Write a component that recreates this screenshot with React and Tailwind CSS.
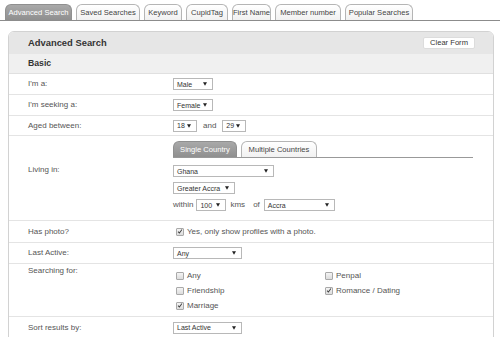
import React from "react";

function Arrow() {
  return (
    <svg width="4" height="4" viewBox="0 0 4 4" className="shrink-0">
      <path d="M0 0.3 L4 0.3 L2 3.8 Z" fill="#222" />
    </svg>
  );
}

function Sel({ text, w }) {
  return (
    <div
      className={`${w} h-[12px] border border-[#b8b8b8] bg-white flex items-center justify-between pl-[3px] pr-[5px] text-[7px] text-[#333] leading-none`}
    >
      <span>{text}</span>
      <Arrow />
    </div>
  );
}

function Check({ checked }) {
  return (
    <span className="w-[8px] h-[8px] border border-[#a9a9a9] rounded-[1px] bg-gradient-to-b from-[#f4f4f4] to-[#dcdcdc] flex items-center justify-center shrink-0">
      {checked && (
        <svg width="7" height="7" viewBox="0 0 7 7">
          <path d="M1.2 3.6 L2.8 5.3 L5.8 1.2" stroke="#444" strokeWidth="1.2" fill="none" />
        </svg>
      )}
    </span>
  );
}

function CheckItem({ checked, label }) {
  return (
    <div className="flex items-center gap-[3px] h-[15px] pl-[3px] text-[8px] text-[#555]">
      <Check checked={checked} />
      <span>{label}</span>
    </div>
  );
}

function Row({ label, children, className = "h-[20px] items-center", labelClass = "" }) {
  return (
    <div className={`flex border-b border-[#e4e4e4] ${className}`}>
      <div className={`w-[164px] pl-[19px] text-[8px] text-[#555] shrink-0 ${labelClass}`}>{label}</div>
      <div className="flex-1">{children}</div>
    </div>
  );
}

const tabs = [
  ["Advanced Search", "w-[67px]", true],
  ["Saved Searches", "w-[64px]"],
  ["Keyword", "w-[38px]"],
  ["CupidTag", "w-[42px]"],
  ["First Name", "w-[39px]"],
  ["Member number", "w-[66px]"],
  ["Popular Searches", "w-[68px]"],
];

export default function App() {
  return (
    <div className="w-[500px] h-[337px] overflow-hidden bg-white font-['Liberation_Sans',Arial,sans-serif]">
      <div className="flex items-end gap-[4px] pl-[5px] pt-[4px] border-b border-[#8c8c8c]">
        {tabs.map(([t, w, active]) => (
          <div
            key={t}
            className={`${w} h-[16px] rounded-t-[6px] border border-b-0 flex items-center justify-center text-[7.6px] whitespace-nowrap ${
              active
                ? "bg-gradient-to-b from-[#a9a9a9] to-[#8f8f8f] border-[#8f8f8f] text-white"
                : "bg-gradient-to-b from-white to-[#f1f1f1] border-[#b5b5b5] text-[#444]"
            }`}
          >
            {t}
          </div>
        ))}
      </div>

      <div className="ml-[8px] mt-[10px] w-[486px] border border-[#d2d2d2] rounded-t-[6px] overflow-hidden">
        <div className="h-[22px] bg-[#e6e6e6] flex items-center justify-between pl-[19px] pr-[18px]">
          <span className="text-[9.4px] font-bold text-[#333]">Advanced Search</span>
          <div className="w-[52px] h-[12px] bg-white border border-[#dcdcdc] rounded-[2px] flex items-center justify-center text-[7.6px] text-[#333]">
            Clear Form
          </div>
        </div>
        <div className="h-[20px] bg-[#f0f0f0] border-b border-[#e0e0e0] flex items-center pl-[19px] text-[8.7px] font-bold text-[#333]">
          Basic
        </div>

        <Row label="I'm a:" className="h-[21px] items-center">
          <Sel text="Male" w="w-[40px]" />
        </Row>
        <Row label="I'm seeking a:" className="h-[21px] items-center">
          <Sel text="Female" w="w-[40px]" />
        </Row>
        <Row label="Aged between:" className="h-[20px] items-center">
          <div className="flex items-center">
            <Sel text="18" w="w-[24px]" />
            <span className="mx-[6px] text-[8px] text-[#555]">and</span>
            <Sel text="29" w="w-[24px]" />
          </div>
        </Row>

        <Row label="Living in:" className="items-start pt-[5px] pb-[9px]" labelClass="pt-[23px]">
          <div className="w-[300px]">
            <div className="flex items-end gap-[4px] border-b border-[#999]">
              <div className="w-[64px] h-[16px] rounded-t-[6px] bg-gradient-to-b from-[#a9a9a9] to-[#8f8f8f] border border-b-0 border-[#8f8f8f] flex items-center justify-center text-[7.6px] text-white">
                Single Country
              </div>
              <div className="w-[76px] h-[16px] rounded-t-[6px] bg-gradient-to-b from-white to-[#f1f1f1] border border-b-0 border-[#b5b5b5] flex items-center justify-center text-[7.6px] text-[#444]">
                Multiple Countries
              </div>
            </div>
            <div className="mt-[7px] flex flex-col gap-[5px]">
              <Sel text="Ghana" w="w-[101px]" />
              <Sel text="Greater Accra" w="w-[62px]" />
              <div className="flex items-center text-[8px] text-[#555]">
                <span className="mr-[3px]">within</span>
                <Sel text="100" w="w-[30px]" />
                <span className="ml-[4px] mr-[8px]">kms</span>
                <span className="mr-[4px]">of</span>
                <Sel text="Accra" w="w-[71px]" />
              </div>
            </div>
          </div>
        </Row>

        <Row label="Has photo?" className="h-[22px] items-center">
          <CheckItem checked label="Yes, only show profiles with a photo." />
        </Row>
        <Row label="Last Active:" className="h-[21px] items-center">
          <Sel text="Any" w="w-[69px]" />
        </Row>
        <Row label="Searching for:" className="items-start pt-[4px] pb-[3px]" labelClass="leading-[8px] -mt-[1px]">
          <div className="grid grid-cols-[149px_1fr]">
            <CheckItem label="Any" />
            <CheckItem label="Penpal" />
            <CheckItem label="Friendship" />
            <CheckItem checked label="Romance / Dating" />
            <CheckItem checked label="Marriage" />
          </div>
        </Row>
        <Row label="Sort results by:" className="h-[22px] items-center">
          <Sel text="Last Active" w="w-[69px]" />
        </Row>
      </div>
    </div>
  );
}
